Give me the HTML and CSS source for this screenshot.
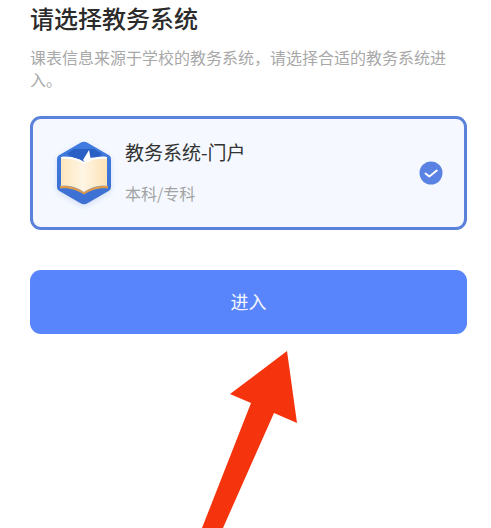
FILE: index.html
```html
<!DOCTYPE html>
<html lang="zh-CN">
<head>
<meta charset="utf-8">
<title>请选择教务系统</title>
<link rel="stylesheet" href="styles.css">
</head>
<body>
<main class="page">
  <h1 class="title">请选择教务系统</h1>
  <p class="desc">课表信息来源于学校的教务系统，请选择合适的教务系统进入。</p>
  <section class="card">
    <svg class="logo" viewBox="0 0 58 64" width="58" height="64" aria-hidden="true">
      <defs>
        <linearGradient id="hex" x1="0" y1="0" x2="0" y2="1">
          <stop offset="0" stop-color="#3f7be0"/>
          <stop offset="1" stop-color="#3d6fd2"/>
        </linearGradient>
        <linearGradient id="pageL" x1="0" y1="0" x2="1" y2="0">
          <stop offset="0" stop-color="#fde6bd"/>
          <stop offset="1" stop-color="#fff6e6"/>
        </linearGradient>
        <linearGradient id="pageR" x1="0" y1="0" x2="1" y2="0">
          <stop offset="0" stop-color="#fff4e2"/>
          <stop offset="1" stop-color="#fde3b6"/>
        </linearGradient>
      </defs>
      <path d="M25.500 1.800a7 7 0 0 1 7 0l21.500 12.500a4 4 0 0 1 2 3.400v28.600a4 4 0 0 1-2 3.400L32.500 62.200a7 7 0 0 1-7 0L4 49.700a4 4 0 0 1-2-3.400V17.700a4 4 0 0 1 2-3.400z" fill="url(#hex)"/>
      <path d="M12 13l15 8h12l8-8-8-5H19z" fill="#2a5fc4"/>
      <path d="M28 19l6-10 1.500 8 4-1-9 6z" fill="#fff"/>
      <path d="M5 45c9-1 18 2 24 6 6-4 15-7 24-6v2.500c-9-1-18 2-24 6-6-4-15-7-24-6z" fill="#dc9a4c"/>
      <path d="M6 16c9-1 17 1 23 5v30c-6-4-14-7-23-6z" fill="url(#pageL)"/>
      <path d="M52 16c-9-1-17 1-23 5v30c6-4 14-7 23-6z" fill="url(#pageR)"/>
      <path d="M6 16c9-1 17 1 23 5 6-4 14-6 23-5l-1 2c-8-.8-16 1-22 5-6-4-14-5.800-22-5z" fill="#fff"/>
    </svg>
    <div class="info">
      <div class="name">教务系统-门户</div>
      <div class="level">本科/专科</div>
    </div>
    <svg class="check" viewBox="0 0 24 24" width="24" height="24" aria-hidden="true">
      <circle cx="12" cy="12" r="11.500" fill="#5a82e2"/>
      <path d="M6.500 12.500l3.800 3 7.500-6" fill="none" stroke="#fff" stroke-width="2" stroke-linecap="round" stroke-linejoin="round"/>
    </svg>
  </section>
  <button class="enter" type="button">进入</button>
</main>
<svg class="arrow" viewBox="0 0 491 528" width="491" height="528" aria-hidden="true">
  <path d="M287 351L230 394L251 403L202 528H223L274 413L297 423Z" fill="#f5330c"/>
</svg>
</body>
</html>
```
FILE: styles.css
```css
* {
  box-sizing: border-box;
}

html,
body {
  margin: 0;
  height: 100%;
  background: #fff;
  overflow: hidden;
}

body {
  position: relative;
  font-family: "Noto Sans CJK SC", "Liberation Sans", sans-serif;
}

.page {
  padding: 1px 24px 0 30px;
}

.title {
  margin: 0;
  font-size: 24px;
  line-height: 34px;
  font-weight: 500;
  color: #2b2b2b;
}

.desc {
  margin: 11px 0 0;
  font-size: 16px;
  line-height: 22px;
  color: #a8a8a8;
}

.card {
  display: flex;
  align-items: center;
  margin-top: 26px;
  height: 114px;
  padding: 0 21px 0 22px;
  background: #f5f9ff;
  border: 3px solid #5b82db;
  border-radius: 11px;
}

.logo {
  flex: none;
  margin-right: 12px;
  filter: drop-shadow(0 2px 3px rgba(60, 100, 190, 0.18));
}

.info {
  flex: 1;
  padding-bottom: 3px;
}

.name {
  font-size: 19px;
  line-height: 26px;
  color: #333;
}

.level {
  margin-top: 17px;
  font-size: 16px;
  line-height: 22px;
  color: #a3a3a3;
}

.check {
  flex: none;
}

.enter {
  display: block;
  width: 100%;
  height: 64px;
  margin-top: 40px;
  padding: 0 0 2px;
  border: 0;
  border-radius: 11px;
  background: #5885fb;
  color: #f4f7ff;
  font: inherit;
  font-size: 18px;
}

.arrow {
  position: absolute;
  left: 0;
  top: 0;
}
```
